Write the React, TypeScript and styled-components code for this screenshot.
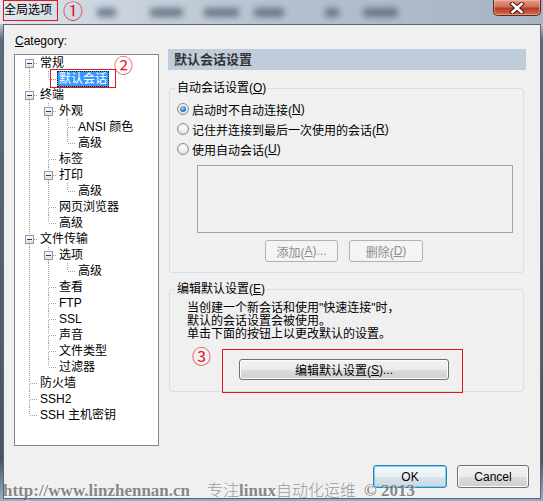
import React from 'react';
import styled, { createGlobalStyle, css } from 'styled-components';

const GlobalStyle = createGlobalStyle`
  html, body { margin: 0; padding: 0; }
  body {
    width: 543px; height: 501px; overflow: hidden;
    font-family: "Liberation Sans", "Noto Sans CJK SC", sans-serif;
    font-size: 12px; color: #000;
  }
  * { box-sizing: border-box; }
`;

const RED = '#e3161b';

const Frame = styled.div`
  position: relative;
  width: 543px;
  height: 501px;
  display: flex;
  flex-direction: column;
  background: linear-gradient(to bottom, #dbe3ec 0px, #bac6d3 24px, #5f6b78 40px, #4a545f 460px, #93aecb 499px);
`;

const TitleBar = styled.div`
  height: 24px;
  display: flex;
  align-items: flex-start;
  padding-left: 3px;
  background: linear-gradient(to right, #e2e8ef 0, #cdd6e0 90px, #b3bfcc 300px, #a7b4c3 543px);
`;

const TitleBox = styled.div`
  width: 55px;
  height: 21px;
  border: 1px solid ${RED};
  font-size: 12px;
  line-height: 19px;
  white-space: nowrap;
`;

const Circled = styled.span<{ $size?: number }>`
  display: inline-block;
  color: ${RED};
  font-family: "Noto Sans CJK SC", sans-serif;
  font-size: ${p => p.$size ?? 20}px;
  line-height: ${p => (p.$size ?? 20) + 4}px;
  white-space: nowrap;
`;

const TitleCircle = styled(Circled)`
  margin: 0 0 0 5px;
  line-height: 22px;
`;

const Blobs = styled.div`
  display: flex;
  align-items: center;
  height: 24px;
`;

const Blob = styled.span<{ $w: number; $ml: number }>`
  width: ${p => p.$w}px;
  margin-left: ${p => p.$ml}px;
  height: 9px;
  border-radius: 3px;
  background: #3f4f63;
  opacity: 0.65;
  filter: blur(3px);
`;

const Spacer = styled.div`
  flex: 1;
`;

const CloseButton = styled.div`
  width: 48px;
  height: 16px;
  margin-right: 2px;
  border: 1px solid #5e2820;
  border-top: none;
  border-radius: 0 0 5px 5px;
  background: linear-gradient(to bottom, #e29b87 0%, #d0705a 45%, #b83a24 55%, #cf6f4d 100%);
  box-shadow: inset 0 0 0 1px rgba(255, 210, 190, 0.45);
  display: flex;
  align-items: center;
  justify-content: center;
`;

const Client = styled.div`
  margin: 0 2px 0 3px;
  height: 475px;
  border: 1px solid #5a6673;
  background: #f0f0f0;
  display: flex;
  flex-direction: column;
`;

const Content = styled.div`
  display: flex;
  padding: 8px 14px 0 10px;
`;

const LeftCol = styled.div`
  width: 145px;
  display: flex;
  flex-direction: column;
`;

const CategoryLabel = styled.div`
  line-height: 16px;
  height: 16px;
  margin-bottom: 5px;
  padding-left: 1px;
`;

const U = styled.span`
  text-decoration: underline;
`;

const TreeBox = styled.div`
  height: 392px;
  border: 1px solid #828790;
  background: #fff;
`;

const TreeRow = styled.div`
  display: flex;
  height: 16px;
  padding-left: 4px;
  align-items: stretch;
`;

const TreeLabelWrap = styled.span`
  position: relative;
  display: flex;
`;

const TreeLabel = styled.span<{ $selected?: boolean }>`
  line-height: 16px;
  height: 16px;
  padding: 0 2px;
  white-space: nowrap;
  color: #000;
  ${p =>
    p.$selected &&
    css`
      background: #3399ff;
      color: #fff;
      outline: 1px dotted #1a1a1a;
      outline-offset: -1px;
    `}
`;

const AnnotBox = styled.span<{ $l: number; $t: number; $w: number; $h: number }>`
  position: absolute;
  left: ${p => p.$l}px;
  top: ${p => p.$t}px;
  width: ${p => p.$w}px;
  height: ${p => p.$h}px;
  border: 1px solid ${RED};
  pointer-events: none;
`;

const AnnotCircle = styled(Circled)<{ $l: number; $t: number }>`
  position: absolute;
  left: ${p => p.$l}px;
  top: ${p => p.$t}px;
`;

const RightCol = styled.div`
  width: 358px;
  margin-left: 9px;
  padding-top: 16px;
  display: flex;
  flex-direction: column;
`;

const HeaderBar = styled.div`
  height: 21px;
  line-height: 21px;
  background: #bfcddb;
  padding-left: 6px;
  font-size: 13px;
  font-weight: bold;
  color: #333;
`;

const Group = styled.fieldset<{ $mt: number; $pb: number }>`
  margin: ${p => p.$mt}px 2px 0 1px;
  padding: 3px 0 ${p => p.$pb}px 0;
  border: 1px solid #d5dfe5;
  border-radius: 3px;
  min-width: 0;
`;

const Legend = styled.legend`
  margin-left: 5px;
  padding: 0 2px;
  line-height: 16px;
  height: 16px;
  font-size: 12px;
`;

const RadioRow = styled.div`
  height: 20px;
  display: flex;
  align-items: center;
  padding-left: 7px;
`;

const Radio = styled.span<{ $checked?: boolean }>`
  width: 12px;
  height: 12px;
  margin-right: 3px;
  border-radius: 50%;
  border: 1px solid #8a8c8e;
  background: radial-gradient(circle at 50% 35%, #ffffff 0, #eeeeee 45%, #cfd1d3 100%);
  display: flex;
  align-items: center;
  justify-content: center;
  ${p =>
    p.$checked &&
    css`
      &::after {
        content: '';
        width: 6px;
        height: 6px;
        border-radius: 50%;
        background: radial-gradient(circle at 40% 35%, #a9dcfb 0, #2e7fcc 55%, #1a4b8a 100%);
      }
    `}
`;

const ListBox = styled.div`
  margin: 6px 0 0 27px;
  width: 316px;
  height: 68px;
  border: 1px solid #a3a3a3;
  background: #f0f0f0;
`;

const ButtonRow = styled.div`
  display: flex;
  gap: 11px;
  margin-top: 7px;
  padding-left: 95px;
`;

const Button = styled.div<{ $w: number; $h?: number; $disabled?: boolean; $default?: boolean }>`
  width: ${p => p.$w}px;
  height: ${p => p.$h ?? 22}px;
  border: 1px solid #707070;
  border-radius: 3px;
  background: linear-gradient(to bottom, #f2f2f2 0%, #ebebeb 50%, #dddddd 51%, #cfcfcf 100%);
  box-shadow: inset 0 0 0 1px #fcfcfc;
  display: flex;
  align-items: center;
  justify-content: center;
  font-size: 12px;
  white-space: nowrap;
  color: #000;
  ${p =>
    p.$disabled &&
    css`
      border-color: #adb2b5;
      background: #f4f4f4;
      box-shadow: none;
      color: #8d8d8d;
    `}
  ${p =>
    p.$default &&
    css`
      border-color: #3c7fb1;
      box-shadow: inset 0 0 0 1px #6fd0f7;
      background: linear-gradient(to bottom, #f4f8fb 0%, #e9f1f6 50%, #d8e4ec 51%, #cbd9e3 100%);
    `}
`;

const InfoText = styled.div`
  margin-top: 2px;
  padding-left: 17px;
  line-height: 13px;
  font-size: 12px;
`;

const ActionRow = styled.div`
  margin-top: 18px;
  padding-left: 69px;
  display: flex;
`;

const ActionWrap = styled.div`
  position: relative;
`;

const Footer = styled.div`
  margin-top: auto;
  display: flex;
  justify-content: flex-end;
  gap: 10px;
  padding: 0 11px 10px 0;
`;

const Watermark = styled.div`
  position: absolute;
  left: 3px;
  top: 480px;
  display: flex;
  align-items: baseline;
  white-space: nowrap;
  pointer-events: none;
`;

const WmSerif = styled.span<{ $ml?: number }>`
  font-family: "Liberation Serif", serif;
  font-weight: bold;
  font-size: 17px;
  line-height: 19px;
  margin-left: ${p => p.$ml ?? 0}px;
  color: rgba(105, 105, 105, 0.8);
  text-shadow: 1px 1px 0 rgba(255, 255, 255, 0.6);
`;

const WmCjk = styled.span<{ $ml?: number }>`
  font-family: "Noto Sans CJK SC", sans-serif;
  font-weight: 300;
  font-size: 16px;
  line-height: 19px;
  margin-left: ${p => p.$ml ?? 0}px;
  color: rgba(120, 120, 120, 0.75);
`;

/* ---------- tree ---------- */

type TNode = { label: React.ReactNode; children?: TNode[]; selected?: boolean };

const tree: TNode[] = [
  { label: '常规', children: [{ label: '默认会话', selected: true }] },
  {
    label: '终端',
    children: [
      { label: '外观', children: [{ label: 'ANSI 颜色' }, { label: '高级' }] },
      { label: '标签' },
      { label: '打印', children: [{ label: '高级' }] },
      { label: '网页浏览器' },
      { label: '高级' },
    ],
  },
  {
    label: '文件传输',
    children: [
      { label: '选项', children: [{ label: '高级' }] },
      { label: '查看' },
      { label: 'FTP' },
      { label: 'SSL' },
      { label: '声音' },
      { label: '文件类型' },
      { label: '过滤器' },
    ],
  },
  { label: '防火墙' },
  { label: 'SSH2' },
  { label: 'SSH 主机密钥' },
];

type Flat = {
  node: TNode;
  level: number;
  up: boolean;
  down: boolean;
  ancestors: boolean[];
};

function flatten(nodes: TNode[], level: number, ancestors: boolean[], out: Flat[]) {
  nodes.forEach((n, i) => {
    const isLast = i === nodes.length - 1;
    out.push({ node: n, level, up: !(level === 0 && i === 0), down: !isLast, ancestors });
    if (n.children) flatten(n.children, level + 1, [...ancestors, !isLast], out);
  });
  return out;
}

const rows = flatten(tree, 0, [], []);

const DOT = '#a0a0a0';

const AncestorCell = ({ line }: { line: boolean }) => (
  <svg width={19} height={16} shapeRendering="crispEdges">
    {line && <line x1={10.5} y1={0} x2={10.5} y2={16} stroke={DOT} strokeDasharray="1 1" />}
  </svg>
);

const OwnCell = ({ up, down, box }: { up: boolean; down: boolean; box: boolean }) => (
  <svg width={19} height={16} shapeRendering="crispEdges">
    <defs>
      <linearGradient id="expg" x1="0" y1="0" x2="0" y2="1">
        <stop offset="0" stopColor="#ffffff" />
        <stop offset="1" stopColor="#dcdcdc" />
      </linearGradient>
    </defs>
    {up && <line x1={10.5} y1={0} x2={10.5} y2={box ? 4 : 8} stroke={DOT} strokeDasharray="1 1" />}
    {down && <line x1={10.5} y1={box ? 13 : 9} x2={10.5} y2={16} stroke={DOT} strokeDasharray="1 1" />}
    <line x1={box ? 15 : 11} y1={8.5} x2={19} y2={8.5} stroke={DOT} strokeDasharray="1 1" />
    {box && (
      <>
        <rect x={6.5} y={4.5} width={8} height={8} fill="url(#expg)" stroke="#8f9aa6" />
        <line x1={8} y1={8.5} x2={13} y2={8.5} stroke="#1f3a7a" />
      </>
    )}
  </svg>
);

const CloseX = () => (
  <svg width={16} height={12} viewBox="0 0 16 12">
    <path d="M3.5 2 L12.5 10 M12.5 2 L3.5 10" stroke="#4a1810" strokeWidth={4.6} strokeLinecap="square" />
    <path d="M3.5 2 L12.5 10 M12.5 2 L3.5 10" stroke="#ffffff" strokeWidth={2.6} strokeLinecap="square" />
  </svg>
);

const blobs = [
  { w: 19, ml: 14 },
  { w: 33, ml: 34 },
  { w: 35, ml: 21 },
  { w: 30, ml: 15 },
  { w: 14, ml: 41 },
  { w: 35, ml: 24 },
];

export default function App() {
  return (
    <>
      <GlobalStyle />
      <Frame>
        <TitleBar>
          <TitleBox>全局选项</TitleBox>
          <TitleCircle>①</TitleCircle>
          <Blobs>
            {blobs.map((b, i) => (
              <Blob key={i} $w={b.w} $ml={b.ml} />
            ))}
          </Blobs>
          <Spacer />
          <CloseButton>
            <CloseX />
          </CloseButton>
        </TitleBar>

        <Client>
          <Content>
            <LeftCol>
              <CategoryLabel>
                <U>C</U>ategory:
              </CategoryLabel>
              <TreeBox>
                {rows.map((r, i) => (
                  <TreeRow key={i}>
                    {r.ancestors.map((a, j) => (
                      <AncestorCell key={j} line={a} />
                    ))}
                    <OwnCell up={r.up} down={r.down} box={!!r.node.children} />
                    <TreeLabelWrap>
                      <TreeLabel $selected={r.node.selected}>{r.node.label}</TreeLabel>
                      {r.node.selected && (
                        <>
                          <AnnotBox $l={-7} $t={-2} $w={66} $h={19} />
                          <AnnotCircle $size={19} $l={57} $t={-18}>
                            ②
                          </AnnotCircle>
                        </>
                      )}
                    </TreeLabelWrap>
                  </TreeRow>
                ))}
              </TreeBox>
            </LeftCol>

            <RightCol>
              <HeaderBar>默认会话设置</HeaderBar>

              <Group $mt={10} $pb={10}>
                <Legend>
                  自动会话设置(<U>O</U>)
                </Legend>
                <RadioRow>
                  <Radio $checked />
                  启动时不自动连接(<U>N</U>)
                </RadioRow>
                <RadioRow>
                  <Radio />
                  记住并连接到最后一次使用的会话(<U>R</U>)
                </RadioRow>
                <RadioRow>
                  <Radio />
                  使用自动会话(<U>U</U>)
                </RadioRow>
                <ListBox />
                <ButtonRow>
                  <Button $w={73} $disabled>
                    添加(<U>A</U>)...
                  </Button>
                  <Button $w={74} $disabled>
                    删除(<U>D</U>)
                  </Button>
                </ButtonRow>
              </Group>

              <Group $mt={8} $pb={11}>
                <Legend>
                  编辑默认设置(<U>E</U>)
                </Legend>
                <InfoText>
                  当创建一个新会话和使用"快速连接"时，
                  <br />
                  默认的会话设置会被使用。
                  <br />
                  单击下面的按钮上以更改默认的设置。
                </InfoText>
                <ActionRow>
                  <ActionWrap>
                    <Button $w={210} $h={21}>
                      编辑默认设置(<U>S</U>)...
                    </Button>
                    <AnnotBox $l={-17} $t={-10} $w={241} $h={44} />
                    <AnnotCircle $size={19} $l={-47} $t={-15}>
                      ③
                    </AnnotCircle>
                  </ActionWrap>
                </ActionRow>
              </Group>
            </RightCol>
          </Content>

          <Footer>
            <Button $w={74} $h={23} $default>
              OK
            </Button>
            <Button $w={72} $h={23}>
              Cancel
            </Button>
          </Footer>
        </Client>

        <Watermark>
          <WmSerif>http://www.linzhennan.cn</WmSerif>
          <WmCjk $ml={17}>
            专注<WmSerif>linux</WmSerif>自动化运维
          </WmCjk>
          <WmSerif $ml={8}>© 2013</WmSerif>
        </Watermark>
      </Frame>
    </>
  );
}
